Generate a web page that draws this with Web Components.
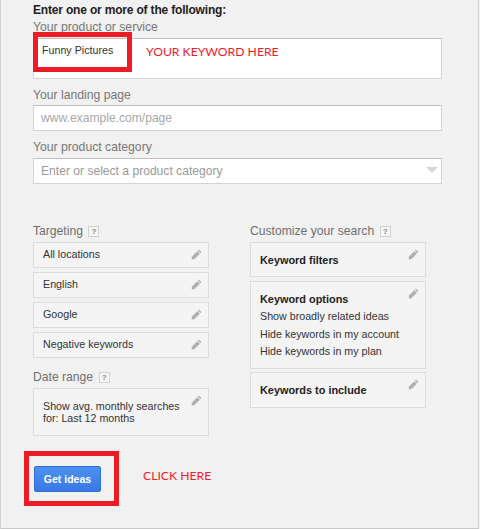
<!DOCTYPE html>
<html><head><meta charset="utf-8">
<style>
html,body{margin:0;padding:0;background:#f1f1f1}
body{width:480px;height:529px;overflow:hidden;font-family:"Liberation Sans",Arial,sans-serif}
</style></head><body>
<kp-page>
  <kp-field label="Your product or service" h="41" first><span style="color:#333;font-size:10.7px;position:relative;top:-1px;left:1px">Funny Pictures</span></kp-field>
  <kp-field label="Your landing page" h="26" gap="9" lm="3"><span style="color:#a8a8a8">www.example.com/page</span></kp-field>
  <kp-field label="Your product category" h="26" gap="9" arrow><span style="color:#999">Enter or select a product category</span></kp-field>
  <kp-columns slot="cols">
    <div slot="left">
      <kp-heading>Targeting</kp-heading>
      <kp-card h="26" gap="4" mt="4">All locations</kp-card>
      <kp-card h="26" gap="4">English</kp-card>
      <kp-card h="26" gap="4">Google</kp-card>
      <kp-card h="26" gap="0">Negative keywords</kp-card>
      <kp-heading style="margin-top:12px">Date range</kp-heading>
      <kp-card h="48" mt="4" multi>Show avg. monthly searches<br>for: Last 12 months</kp-card>
    </div>
    <div slot="right">
      <kp-heading>Customize your search</kp-heading>
      <kp-card h="35" gap="4" mt="4" bold>Keyword filters</kp-card>
      <kp-card h="88" gap="3" options>
        <b>Keyword options</b>
        <span>Show broadly related ideas</span>
        <span>Hide keywords in my account</span>
        <span>Hide keywords in my plan</span>
      </kp-card>
      <kp-card h="36" bold>Keywords to include</kp-card>
    </div>
  </kp-columns>
</kp-page>
<script>
const pencil=`<svg width="11" height="11" viewBox="0 0 12 12" style="display:block"><path d="M8.6.6 11.4 3.4 10.2 4.6 7.4 1.8Z" fill="#b5b5b5"/><path d="M6.8 2.4 9.6 5.2 3.6 11.2.8 11.4 1 8.2Z" fill="#b0b0b0"/></svg>`;
class KpPage extends HTMLElement{constructor(){super();this.attachShadow({mode:'open'}).innerHTML=`<style>
:host{display:block;position:relative;box-sizing:border-box;width:479px;height:529px;background:#f1f1f1;border-left:1px solid #d4d4d4;border-right:1px solid #d4d4d4;border-bottom:1px solid #c8c8c8;padding:3px 36px 0 32px;color:#222}
h1{font-size:12px;line-height:14px;margin:0 0 3px;font-weight:bold;color:#222;letter-spacing:-.18px}
.mark{position:absolute;box-sizing:border-box;border:5px solid #ed1c24}
.note{position:absolute;font-family:Lato,"Open Sans",sans-serif;font-size:12.2px;line-height:16px;color:#f01c2c;white-space:nowrap}
.cols{margin-top:40px;display:block}
button{position:absolute;left:33px;top:466px;width:67px;height:26px;box-sizing:border-box;border:1px solid #2f6fd8;border-radius:2px;background:linear-gradient(#4d90f0,#3a78e6);color:#fff;font:bold 10.5px "Liberation Sans",Arial,sans-serif;padding:0}
</style>
<h1>Enter one or more of the following:</h1>
<slot></slot>
<div class="cols"><slot name="cols"></slot></div>
<div class="mark" style="left:32px;top:32px;width:99px;height:40px"></div>
<div class="note" style="left:145px;top:44px">YOUR KEYWORD HERE</div>
<button>Get ideas</button>
<div class="mark" style="left:23px;top:451px;width:95px;height:55px"></div>
<div class="note" style="left:142px;top:468px">CLICK HERE</div>`}}
customElements.define('kp-page',KpPage);
class KpField extends HTMLElement{connectedCallback(){if(this.shadowRoot)return;const h=this.getAttribute('h'),g=this.getAttribute('gap')||0,lm=this.getAttribute('lm')||4;
this.attachShadow({mode:'open'}).innerHTML=`<style>
:host{display:block;margin-top:${g}px;position:relative}
label{display:block;font-size:12.2px;line-height:14px;margin-bottom:${lm}px;color:#777}
.box{box-sizing:border-box;height:${h}px;background:#fff;border:1px solid #d3d3d3;border-top-color:#c0c0c0;padding:${h>30?'4px':'0'} 7px 0;font-size:12.1px;line-height:${h>30?'16px':(h-2)+'px'};width:409px;position:relative}
.arrow{position:absolute;right:3px;top:8px;width:0;height:0;border:6px solid transparent;border-top:6px solid #d6d6d6;border-bottom:0}
</style><label>${this.getAttribute('label')}</label><div class="box"><slot></slot>${this.hasAttribute('arrow')?'<div class="arrow"></div>':''}</div>`}}
customElements.define('kp-field',KpField);
class KpColumns extends HTMLElement{constructor(){super();this.attachShadow({mode:'open'}).innerHTML=`<style>
:host{display:grid;grid-template-columns:176px 176px;column-gap:41px}
</style><div><slot name="left"></slot></div><div><slot name="right"></slot></div>`}}
customElements.define('kp-columns',KpColumns);
class KpHeading extends HTMLElement{constructor(){super();this.attachShadow({mode:'open'}).innerHTML=`<style>
:host{display:flex;align-items:center;gap:5.5px;font-size:12.15px;line-height:14px;color:#6f6f6f}
i{box-sizing:border-box;display:block;width:11px;height:11px;margin-top:1px;border:1px solid #d2d2d2;background:#f6f6f6;color:#888;font:bold 8px/9px "Liberation Sans",Arial,sans-serif;text-align:center}
</style><slot></slot><i>?</i>`}}
customElements.define('kp-heading',KpHeading);
class KpCard extends HTMLElement{connectedCallback(){if(this.shadowRoot)return;const h=this.getAttribute('h'),g=this.getAttribute('gap')||0,m=this.getAttribute('mt')||0;
const opt=this.hasAttribute('options'),bold=this.hasAttribute('bold'),multi=this.hasAttribute('multi');
this.attachShadow({mode:'open'}).innerHTML=`<style>
:host{display:block;box-sizing:border-box;position:relative;height:${h}px;margin-top:${m}px;margin-bottom:${g}px;background:#f4f4f4;border:1px solid #dcdcdc;font-size:10.7px;color:#333;
padding:${opt?'10px':bold?'10px':multi?'11px':'4px'} 9px 0;line-height:${multi?'12px':'14px'};${bold?'font-weight:bold;font-size:10.9px;color:#222;':''}}
:host([options]) {display:flex;flex-direction:column}
::slotted(b){color:#222;font-size:10.9px;line-height:14px;margin-bottom:3px}
::slotted(span){line-height:14px;margin-bottom:3.5px}
.p{position:absolute;right:6px;top:6px}
</style><slot></slot><div class="p">${pencil}</div>`}}
customElements.define('kp-card',KpCard);
</script>
</body></html>
